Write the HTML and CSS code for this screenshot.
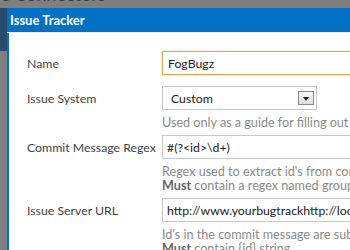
FILE: index.html
```html
<!DOCTYPE html>
<html lang="en">
  <head>
    <meta charset="UTF-8" />
    <meta name="viewport" content="width=device-width, initial-scale=1.0" />
    <title>Issue Tracker</title>
    <link rel="stylesheet" href="styles.css">
  </head>
  <body>
    <div class="backdrop">
      <h1 class="page-title">Issue Connectors</h1>
      <div class="side"></div>
    </div>

    <div class="dialog">
      <div class="dialog-title">Issue Tracker</div>
      <form class="dialog-body" id="formTracker">
        <div class="row">
          <label for="name">Name</label>
          <input class="field focused" type="text" id="name" value="FogBugz" />
        </div>
        <div class="row">
          <label for="system">Issue System</label>
          <div class="field select" id="system">
            <span>Custom</span>
            <span class="arrow"></span>
          </div>
          <p class="help">Used only as a guide for filling out the fields below</p>
        </div>
        <div class="row">
          <label for="regex">Commit Message Regex</label>
          <input class="field" type="text" id="regex" value="#(?<id>\d+)" />
          <p class="help">Regex used to extract id's from commit messages.<br /><b>Must</b> contain a regex named group called id</p>
        </div>
        <div class="row">
          <label for="url">Issue Server URL</label>
          <input class="field" type="text" id="url" value="http://www.yourbugtrackhttp://localhost/fogbugz/default.asp?{id}" />
          <p class="help">Id's in the commit message are substituted into this url.<br /><b>Must</b> contain {id} string</p>
        </div>
      </form>
    </div>
  </body>
</html>
```

FILE: styles.css
```css
html, body {
  margin: 0;
  padding: 0;
}
body {
  background-color: #7f7f7f;
  font-family: Lato, "Open Sans", sans-serif;
  font-size: 12.3px;
  overflow: hidden;
  height: 250px;
}
.backdrop {
  height: 250px;
  overflow: hidden;
}
.page-title {
  margin: -16px 0 0 -30px;
  font-size: 18px;
  line-height: 20px;
  font-weight: normal;
  color: #3b3b3b;
  white-space: nowrap;
}
.side {
  width: 7px;
  height: 43px;
  margin-top: 4px;
  background-color: #294b6c;
}
.dialog {
  position: absolute;
  left: 7px;
  top: 8px;
  width: 400px;
  height: 260px;
  background-color: #fff;
  border-left: 2px solid #0071c5;
}
.dialog-title {
  height: 24px;
  line-height: 24px;
  padding-left: 3px;
  margin-left: -2px;
  background-color: #0071c5;
  color: #fff;
  font-weight: bold;
  font-size: 13px;
  border-bottom: 1px solid #ececec;
}
.dialog-body {
  padding: 18px 0 0 18px;
}
.row {
  display: grid;
  grid-template-columns: 135px 260px;
  margin-bottom: 5px;
}
.row label {
  height: 24px;
  display: flex;
  align-items: center;
  color: #444;
  white-space: nowrap;
}
.field {
  box-sizing: border-box;
  height: 24px;
  margin: 0 0 6px 0;
  padding: 0 4px;
  border: 1px solid #c6c6c6;
  font-family: inherit;
  font-size: 12.3px;
  color: #222;
  background: #fff;
  outline: none;
}
.focused {
  border: 1px solid #dba852;
  box-shadow: 0 0 2px #f1cc85;
  padding-left: 5px;
}
.select {
  width: 155px;
  display: flex;
  align-items: center;
  justify-content: space-between;
  padding: 0 2px 0 8px;
}
.arrow {
  width: 16px;
  height: 14px;
  box-sizing: border-box;
  border: 1px solid #8a8a8a;
  background: linear-gradient(#fafafa, #dedede);
  position: relative;
}
.arrow::after {
  content: "";
  position: absolute;
  left: 4px;
  top: 5px;
  border-left: 3px solid transparent;
  border-right: 3px solid transparent;
  border-top: 4px solid #222;
}
.help {
  grid-column: 2;
  margin: 0;
  font-size: 12.6px;
  line-height: 14px;
  color: #8a8a8a;
  white-space: nowrap;
}
.help b {
  color: #666;
}
```
